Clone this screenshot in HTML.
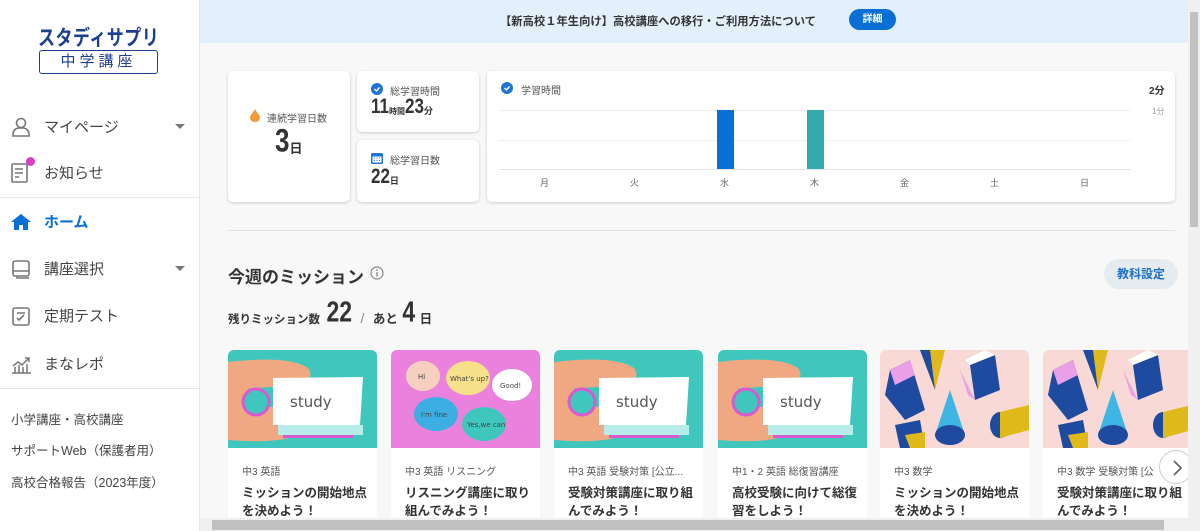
<!DOCTYPE html>
<html><head><meta charset="utf-8"><style>
*{margin:0;padding:0;box-sizing:border-box}
body{width:1200px;height:531px;overflow:hidden;background:#f8f8f8;font-family:"Liberation Sans","Noto Sans CJK JP",sans-serif;color:#333;position:relative}
.side{position:absolute;left:0;top:0;width:200px;height:531px;background:#fff;border-right:1px solid #e6e6e6}
.logo{position:absolute;left:38px;top:20px;color:#1d3f8f;font-weight:bold;font-size:17px;letter-spacing:0.5px;transform:scaleY(1.25);transform-origin:left top}
.logobox{position:absolute;left:39px;top:50px;width:119px;height:24px;border:1.5px solid #1d3f8f;border-radius:3px;color:#1d3f8f;font-size:15px;text-align:center;line-height:21px;letter-spacing:4px}
.nav{position:absolute;left:0;width:200px;font-size:15px;color:#444}
.nav svg{position:absolute;left:10px}
.nav span{position:absolute;left:44px}
.tri{position:absolute;left:175px;width:0;height:0;border-left:5px solid transparent;border-right:5px solid transparent;border-top:5px solid #777}
.hr{position:absolute;left:0;width:200px;height:1px;background:#e6e6e6}
.link{position:absolute;left:11px;font-size:12.5px;color:#444}
.banner{position:absolute;left:200px;top:0;width:988px;height:43px;background:#e3f0fb}
.banner .t{position:absolute;left:300px;top:13px;font-size:11.3px;font-weight:bold;color:#333;white-space:nowrap}
.banner .b{position:absolute;left:649px;top:9px;width:47px;height:21px;border-radius:11px;background:#0a6fd4;color:#fff;font-size:10px;font-weight:bold;text-align:center;line-height:21px}
.card{position:absolute;background:#fff;border-radius:5px;box-shadow:0 1px 3px rgba(0,0,0,.18)}
.sm{font-size:10px;color:#555}
.vscroll{position:absolute;left:1188px;top:0;width:12px;height:531px;background:#f0f0f0}
.vscroll div{position:absolute;left:2px;top:12px;width:8px;height:215px;background:#c1c1c1}
.hscroll{position:absolute;left:200px;top:518px;width:988px;height:13px;background:#f0f0f0}
.hscroll div{position:absolute;left:12px;top:2px;width:952px;height:10px;background:#c1c1c1}
.mc{position:absolute;top:350px;width:149px;height:180px;background:#fff;border-radius:6px;overflow:hidden}
.mc .img{height:98px}
.mc .s{position:absolute;left:14px;top:113px;font-size:10px;color:#555;white-space:nowrap}
.mc .h{position:absolute;left:14px;top:134px;font-size:12.5px;font-weight:bold;color:#333;line-height:18px;width:125px}
.big{display:inline-block;transform:scaleY(1.25);transform-origin:center bottom}
</style></head><body>
<div class="side">
<div class="logo">スタディサプリ</div>
<div class="logobox">中学講座</div>
<div class="nav" style="top:116px"><svg width="22" height="22" viewBox="0 0 22 22" fill="none" stroke="#777" stroke-width="1.6"><circle cx="11" cy="7" r="4.5"/><path d="M3 20v-2a6 6 0 0 1 6-6h4a6 6 0 0 1 6 6v2z"/></svg><span>マイページ</span><div class="tri" style="top:8px"></div></div>
<div class="nav" style="top:162px"><svg width="22" height="22" viewBox="0 0 22 22" fill="none" stroke="#777" stroke-width="1.6"><rect x="2" y="2" width="15" height="18" rx="1"/><path d="M5 7h8M5 11h8M5 15h4"/></svg><div style="position:absolute;left:26px;top:-5px;width:9px;height:9px;border-radius:50%;background:#d93fc5"></div><span>お知らせ</span></div>
<div class="hr" style="top:197px"></div>
<div class="nav" style="top:211px;color:#0a6fd4;font-weight:bold"><svg width="22" height="22" viewBox="0 0 22 22"><path d="M11 3L1 11h3v8h5v-5h4v5h5v-8h3z" fill="#0a6fd4"/></svg><span>ホーム</span></div>
<div class="nav" style="top:258px"><svg width="22" height="22" viewBox="0 0 22 22" fill="none" stroke="#777" stroke-width="1.6"><rect x="3" y="3" width="16" height="15" rx="2"/><path d="M3 13h16M7 18v2h12"/></svg><span>講座選択</span><div class="tri" style="top:8px"></div></div>
<div class="nav" style="top:305px"><svg width="22" height="22" viewBox="0 0 22 22" fill="none" stroke="#777" stroke-width="1.6"><rect x="3" y="3" width="16" height="17" rx="2"/><path d="M7 8h8M7 13l2 2 5-5"/></svg><span>定期テスト</span></div>
<div class="nav" style="top:353px"><svg width="22" height="22" viewBox="0 0 22 22" fill="none" stroke="#777" stroke-width="1.5"><path d="M2 20h19M5 20v-6M9 20v-8M13 20v-6M17 20v-9M3 13l5-4 4 3 7-7M15 5h4v4"/></svg><span>まなレポ</span></div>
<div class="hr" style="top:388px"></div>
<div class="link" style="top:409px">小学講座・高校講座</div>
<div class="link" style="top:440px">サポートWeb（保護者用）</div>
<div class="link" style="top:472px">高校合格報告（2023年度）</div>
</div>

<div class="banner"><div class="t">【新高校１年生向け】高校講座への移行・ご利用方法について</div><div class="b">詳細</div></div>

<div class="card" style="left:228px;top:71px;width:122px;height:131px">
<svg style="position:absolute;left:22px;top:38px" width="10" height="13" viewBox="0 0 10 13"><path d="M5 0C7 4 10 6 10 9a5 4 0 0 1-10 0C0 6 3 4 5 0z" fill="#f29a38"/></svg>
<div class="sm" style="position:absolute;left:39px;top:39px">連続学習日数</div>
<div style="position:absolute;left:47px;top:58px;font-size:26px;font-weight:bold;color:#333"><span class="big">3</span><span style="font-size:13px">日</span></div>
</div>
<div class="card" style="left:357px;top:71px;width:122px;height:61px">
<svg style="position:absolute;left:14px;top:12px" width="12" height="12"><circle cx="6" cy="6" r="6" fill="#1f74d8"/><path d="M3.5 6l2 2 3-3.5" stroke="#fff" stroke-width="1.4" fill="none"/></svg>
<div class="sm" style="position:absolute;left:33px;top:12px">総学習時間</div>
<div style="position:absolute;left:14px;top:28px;font-size:17px;font-weight:bold;color:#333"><span class="big">11</span><span style="font-size:8px">時間</span><span class="big">23</span><span style="font-size:9px">分</span></div>
</div>
<div class="card" style="left:357px;top:140px;width:122px;height:62px">
<svg style="position:absolute;left:14px;top:12px" width="12" height="12"><rect x="0" y="1" width="12" height="11" rx="1.5" fill="#1f74d8"/><rect x="1.5" y="4.5" width="9" height="6" fill="#fff"/><path d="M3 6h1M5.5 6h1M8 6h1M3 8.5h1M5.5 8.5h1M8 8.5h1" stroke="#1f74d8"/></svg>
<div class="sm" style="position:absolute;left:33px;top:12px">総学習日数</div>
<div style="position:absolute;left:14px;top:29px;font-size:17px;font-weight:bold;color:#333"><span class="big">22</span><span style="font-size:9px">日</span></div>
</div>
<div class="card" style="left:487px;top:71px;width:688px;height:131px">
<svg style="position:absolute;left:14px;top:11px" width="12" height="12"><circle cx="6" cy="6" r="6" fill="#1f74d8"/><path d="M3.5 6l2 2 3-3.5" stroke="#fff" stroke-width="1.4" fill="none"/></svg>
<div class="sm" style="position:absolute;left:34px;top:11px">学習時間</div>
<div style="position:absolute;left:662px;top:11px;font-size:10px;font-weight:bold">2分</div>
<div style="position:absolute;left:665px;top:35px;font-size:8px;color:#999">1分</div>
<div style="position:absolute;left:12px;top:39px;width:632px;height:1px;background:#eee"></div>
<div style="position:absolute;left:12px;top:69px;width:632px;height:1px;background:#eee"></div>
<div style="position:absolute;left:12px;top:98px;width:632px;height:1px;background:#e6e6e6"></div>
<div style="position:absolute;left:230px;top:39px;width:17px;height:59px;background:#0a6fd4"></div>
<div style="position:absolute;left:320px;top:39px;width:17px;height:59px;background:#35aaaa"></div>
<div style="position:absolute;top:105px;left:0;width:688px;font-size:9px;color:#666">
<span style="position:absolute;left:53px">月</span><span style="position:absolute;left:143px">火</span><span style="position:absolute;left:233px">水</span><span style="position:absolute;left:323px">木</span><span style="position:absolute;left:413px">金</span><span style="position:absolute;left:503px">土</span><span style="position:absolute;left:593px">日</span></div>
</div>

<div style="position:absolute;left:228px;top:230px;width:947px;height:1px;background:#e2e2e2"></div>
<div style="position:absolute;left:228px;top:263px;font-size:17px;font-weight:bold;color:#333">今週のミッション</div>
<svg style="position:absolute;left:370px;top:266px" width="14" height="14"><circle cx="7" cy="7" r="6" fill="none" stroke="#888" stroke-width="1.2"/><path d="M7 6v4.5" stroke="#888" stroke-width="1.3"/><circle cx="7" cy="4" r=".9" fill="#888"/></svg>
<div style="position:absolute;left:1104px;top:259px;width:74px;height:30px;border-radius:15px;background:#e5ecef;color:#1f6fc8;font-size:12px;font-weight:bold;text-align:center;line-height:30px">教科設定</div>
<div style="position:absolute;left:228px;top:302px;white-space:nowrap;color:#333;font-weight:bold">
<span style="font-size:11.5px">残りミッション数</span> <span class="big" style="font-size:23px;margin-left:2px">22</span> <span style="font-size:14px;color:#888;font-weight:normal;margin:0 4px">/</span> <span style="font-size:12.5px">あと</span> <span class="big" style="font-size:23px">4</span> <span style="font-size:12.5px">日</span></div>

<div class="mc" style="left:228px"><div class="img"><svg width="149" height="98"><rect width="149" height="98" fill="#3fc6bd"/><path d="M0 12 Q60 5 80 18 Q88 30 70 35 L0 40z M0 55 L70 58 Q85 62 80 80 Q60 95 0 90z" fill="#f0a882"/><rect x="0" y="35" width="20" height="25" fill="#f0a882"/><path d="M45 28 L135 27 L132 75 L45 75z" fill="#fff"/><path d="M50 75h85v10H50z" fill="#b8ece8"/><path d="M55 85h70v3H55z" fill="#d95ad0"/><circle cx="28" cy="52" r="13" fill="#3fc6bd" stroke="#d95ad0" stroke-width="3"/><text x="62" y="57" font-size="15" fill="#555" font-family="DejaVu Sans">study</text></svg></div><div class="s">中3 英語</div><div class="h">ミッションの開始地点を決めよう！</div></div>
<div class="mc" style="left:391px"><div class="img"><svg width="149" height="98"><rect width="149" height="98" fill="#ea82dd"/><ellipse cx="32" cy="26" rx="17" ry="15" fill="#f7cfc0"/><ellipse cx="77" cy="28" rx="22" ry="17" fill="#f7e08a"/><ellipse cx="121" cy="35" rx="20" ry="16" fill="#fff"/><ellipse cx="45" cy="64" rx="22" ry="17" fill="#3caee3"/><ellipse cx="93" cy="74" rx="22" ry="17" fill="#3fc6bd"/><g font-size="7" fill="#444" font-family="DejaVu Sans"><text x="27" y="29">Hi</text><text x="59" y="31">What's up?</text><text x="109" y="38">Good!</text><text x="30" y="67">I'm fine</text><text x="76" y="77">Yes,we can</text></g></svg></div><div class="s">中3 英語 リスニング</div><div class="h">リスニング講座に取り組んでみよう！</div></div>
<div class="mc" style="left:554px"><div class="img"><svg width="149" height="98"><rect width="149" height="98" fill="#3fc6bd"/><path d="M0 12 Q60 5 80 18 Q88 30 70 35 L0 40z M0 55 L70 58 Q85 62 80 80 Q60 95 0 90z" fill="#f0a882"/><rect x="0" y="35" width="20" height="25" fill="#f0a882"/><path d="M45 28 L135 27 L132 75 L45 75z" fill="#fff"/><path d="M50 75h85v10H50z" fill="#b8ece8"/><path d="M55 85h70v3H55z" fill="#d95ad0"/><circle cx="28" cy="52" r="13" fill="#3fc6bd" stroke="#d95ad0" stroke-width="3"/><text x="62" y="57" font-size="15" fill="#555" font-family="DejaVu Sans">study</text></svg></div><div class="s">中3 英語 受験対策 [公立...</div><div class="h">受験対策講座に取り組んでみよう！</div></div>
<div class="mc" style="left:718px"><div class="img"><svg width="149" height="98"><rect width="149" height="98" fill="#3fc6bd"/><path d="M0 12 Q60 5 80 18 Q88 30 70 35 L0 40z M0 55 L70 58 Q85 62 80 80 Q60 95 0 90z" fill="#f0a882"/><rect x="0" y="35" width="20" height="25" fill="#f0a882"/><path d="M45 28 L135 27 L132 75 L45 75z" fill="#fff"/><path d="M50 75h85v10H50z" fill="#b8ece8"/><path d="M55 85h70v3H55z" fill="#d95ad0"/><circle cx="28" cy="52" r="13" fill="#3fc6bd" stroke="#d95ad0" stroke-width="3"/><text x="62" y="57" font-size="15" fill="#555" font-family="DejaVu Sans">study</text></svg></div><div class="s">中1・2 英語 総復習講座</div><div class="h">高校受験に向けて総復習をしよう！</div></div>
<div class="mc" style="left:880px"><div class="img"><svg width="149" height="98"><rect width="149" height="98" fill="#f8d9d6"/><path d="M10 20 L30 10 L45 60 L25 70 L5 45z" fill="#1e4aa0"/><path d="M10 20 L30 10 L35 25 L15 35z" fill="#eaa0e6"/><path d="M40 0 L65 0 L55 40z" fill="#e0b91a"/><path d="M40 0 L55 40 L50 0z" fill="#1e4aa0"/><path d="M90 15 L115 5 L120 40 L95 50z" fill="#1e4aa0"/><path d="M90 15 L115 5 L105 0 L85 10z" fill="#fff"/><path d="M80 20 L95 50 L88 45z" fill="#eaa0e6"/><path d="M70 40 L55 85 L85 85z" fill="#3eb5e5"/><ellipse cx="70" cy="85" rx="15" ry="10" fill="#1e4aa0"/><ellipse cx="120" cy="75" rx="10" ry="13" fill="#1e4aa0"/><path d="M120 62 L149 55 L149 80 L120 88z" fill="#e0b91a"/><path d="M15 75 L40 70 L45 98 L20 98z" fill="#1e4aa0"/><path d="M25 85 L45 82 L45 98 L30 98z" fill="#e0b91a"/></svg></div><div class="s">中3 数学</div><div class="h">ミッションの開始地点を決めよう！</div></div>
<div class="mc" style="left:1043px"><div class="img"><svg width="149" height="98"><rect width="149" height="98" fill="#f8d9d6"/><path d="M10 20 L30 10 L45 60 L25 70 L5 45z" fill="#1e4aa0"/><path d="M10 20 L30 10 L35 25 L15 35z" fill="#eaa0e6"/><path d="M40 0 L65 0 L55 40z" fill="#e0b91a"/><path d="M40 0 L55 40 L50 0z" fill="#1e4aa0"/><path d="M90 15 L115 5 L120 40 L95 50z" fill="#1e4aa0"/><path d="M90 15 L115 5 L105 0 L85 10z" fill="#fff"/><path d="M80 20 L95 50 L88 45z" fill="#eaa0e6"/><path d="M70 40 L55 85 L85 85z" fill="#3eb5e5"/><ellipse cx="70" cy="85" rx="15" ry="10" fill="#1e4aa0"/><ellipse cx="120" cy="75" rx="10" ry="13" fill="#1e4aa0"/><path d="M120 62 L149 55 L149 80 L120 88z" fill="#e0b91a"/><path d="M15 75 L40 70 L45 98 L20 98z" fill="#1e4aa0"/><path d="M25 85 L45 82 L45 98 L30 98z" fill="#e0b91a"/></svg></div><div class="s">中3 数学 受験対策 [公</div><div class="h">受験対策講座に取り組んでみよう！</div></div>
<div style="position:absolute;left:1159px;top:450px;width:34px;height:34px;border-radius:50%;background:#fff;border:1px solid #ccc"><svg width="34" height="34"><path d="M14 10l7 7-7 7" stroke="#666" stroke-width="1.8" fill="none"/></svg></div>

<div class="vscroll"><div></div></div>
<div class="hscroll"><div></div></div>
</body></html>
